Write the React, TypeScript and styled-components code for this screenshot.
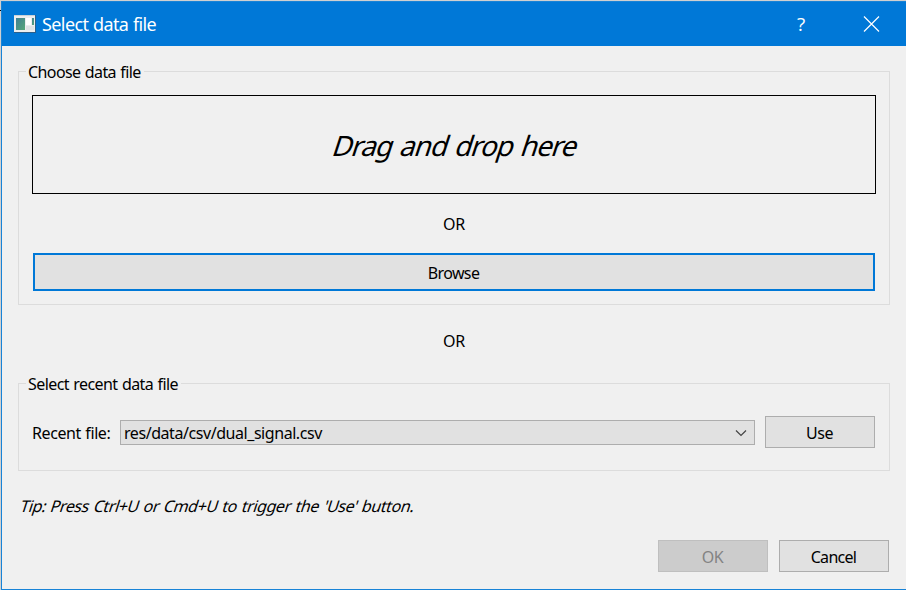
import React from "react";
import styled, { createGlobalStyle } from "styled-components";

const Global = createGlobalStyle`
  * { box-sizing: border-box; }
  body { margin: 0; overflow: hidden; background: #f0f0f0; }
`;

const Frame = styled.div`
  width: 906px;
  height: 590px;
  padding: 1px 0 0 1px;
  background: linear-gradient(#000, #000) 0 10px / 1px 1px no-repeat #d0d0d0;
`;

const Dialog = styled.div`
  height: 589px;
  display: flex;
  flex-direction: column;
  background: #f0f0f0;
  border: solid #1883d7;
  border-width: 1px 0 1px 1px;
  font: 16px/20px "Noto Sans", sans-serif;
  font-variant-ligatures: none;
  color: #000;
`;

const TitleBar = styled.header`
  height: 44px;
  flex: none;
  display: flex;
  align-items: center;
  padding: 0 26px 0 12px;
  background: #0078d7;
  color: #fff;
`;

const Title = styled.h1`
  flex: 1;
  margin: 0 0 0 6px;
  font-size: 18px;
  line-height: 24px;
  font-weight: 400;
`;

const TitleButton = styled.button`
  width: 18px;
  height: 18px;
  padding: 0;
  margin-left: 52px;
  border: 0;
  background: none;
  color: #fff;
  font: 400 19px/18px "Open Sans", "Noto Sans", sans-serif;
`;

const Label = styled.span<{ $spacing?: number; $words?: number }>`
  display: inline-block;
  white-space: pre;
  letter-spacing: ${(p) => p.$spacing ?? 0}px;
  word-spacing: ${(p) => p.$words ?? 0}px;
`;

const Slanted = styled(Label)`
  transform: skewX(-18deg);
`;

const Content = styled.main`
  flex: 1;
  display: flex;
  flex-direction: column;
  padding: 15px 16px 17px;
`;

const Group = styled.fieldset<{ $height: number }>`
  height: ${(p) => p.$height}px;
  flex: none;
  min-width: 0;
  margin: 0;
  padding: 0 13px;
  border: 1px solid #dcdcdc;
  display: flex;
  flex-direction: column;
`;

const Legend = styled.legend`
  height: 20px;
  line-height: 22px;
  margin-left: -6px;
  padding: 0 3px 0 2px;
`;

const DropZone = styled.div`
  height: 99px;
  margin-top: 14px;
  padding-left: 4px;
  flex: none;
  display: flex;
  align-items: center;
  justify-content: center;
  border: 1px solid #000;
  font-size: 28px;
  line-height: 36px;
`;

const Divider = styled.div<{ $height: number; $offset?: number }>`
  height: ${(p) => p.$height}px;
  padding-top: ${(p) => p.$offset ?? 0}px;
  flex: none;
  display: flex;
  align-items: center;
  justify-content: center;
`;

const PushButton = styled.button<{ $primary?: boolean }>`
  width: ${(p) => (p.$primary ? "auto" : "110px")};
  height: ${(p) => (p.$primary ? 38 : 32)}px;
  margin: ${(p) => (p.$primary ? "0 1px" : "0")};
  flex: none;
  padding: 2px 1px 0 0;
  border: ${(p) => (p.$primary ? "2px solid #0078d7" : "1px solid #adadad")};
  background: #e1e1e1;
  color: #000;
  font: inherit;
  &:disabled {
    border-color: #bfbfbf;
    background: #ccc;
    color: #838383;
  }
`;

const RecentRow = styled.div`
  display: flex;
  align-items: center;
  height: 32px;
  margin-top: 23px;
  padding-right: 1px;
`;

const RecentLabel = styled.label`
  width: 88px;
  padding-top: 2px;
`;

const ComboBox = styled.div`
  flex: 1;
  height: 25px;
  margin: 1px 10px 0 0;
  display: flex;
  align-items: center;
  justify-content: space-between;
  padding: 1px 7px 0 3px;
  border: 1px solid #adadad;
  background: #e1e1e1;
`;

const Tip = styled.p`
  margin: 25px 0 0 3px;
`;

const Actions = styled.footer`
  display: flex;
  justify-content: flex-end;
  gap: 11px;
  margin-top: auto;
  padding-right: 1px;
`;

const WindowIcon = () => (
  <svg width="22" height="19" viewBox="0 0 22 19" shapeRendering="crispEdges">
    <defs>
      <linearGradient id="pane" x1="0" y1="0" x2="1" y2="1">
        <stop offset="0" stopColor="#3f7f94" />
        <stop offset="1" stopColor="#58a878" />
      </linearGradient>
    </defs>
    <rect width="22" height="18" fill="#2c5f8a" />
    <rect y="0" width="21" height="17" fill="#eceeef" />
    <rect y="0" width="21" height="1" fill="#c9d2d8" />
    <rect x="2" y="3" width="9" height="12" fill="url(#pane)" />
    <rect x="12" y="3" width="5" height="7" fill="#fff" />
    <rect x="12" y="11" width="8" height="4" fill="#e0e3e5" />
    <rect x="18" y="3" width="2" height="7" fill="url(#pane)" />
  </svg>
);

export default function App() {
  return (
    <>
      <Global />
      <Frame>
        <Dialog>
          <TitleBar>
            <WindowIcon />
            <Title><Label $spacing={-0.6} $words={0.5}>Select data file</Label></Title>
            <TitleButton aria-label="Help">?</TitleButton>
            <TitleButton aria-label="Close">
              <svg width="18" height="18" viewBox="0 0 18 18">
                <path d="M2 1.5l15 15m0-15l-15 15" stroke="#fff" strokeWidth="1.2" />
              </svg>
            </TitleButton>
          </TitleBar>
          <Content>
            <Group $height={244}>
              <Legend><Label $spacing={-0.6} $words={0.8}>Choose data file</Label></Legend>
              <DropZone><Slanted $spacing={-1.2} $words={2.2}>Drag and drop here</Slanted></DropZone>
              <Divider $height={59}><Label $spacing={-0.3}>OR</Label></Divider>
              <PushButton $primary><Label $spacing={-0.6}>Browse</Label></PushButton>
            </Group>
            <Divider $height={68} $offset={3}><Label $spacing={-0.3}>OR</Label></Divider>
            <Group $height={98}>
              <Legend><Label $spacing={-0.58} $words={0.8}>Select recent data file</Label></Legend>
              <RecentRow>
                <RecentLabel><Label $spacing={-0.42} $words={0.8}>Recent file:</Label></RecentLabel>
                <ComboBox>
                  <Label $spacing={-0.44}>res/data/csv/dual_signal.csv</Label>
                  <svg width="12" height="8" viewBox="0 0 12 8">
                    <path d="M1 1.5l5 5 5-5" fill="none" stroke="#444" strokeWidth="1.2" />
                  </svg>
                </ComboBox>
                <PushButton><Label $spacing={-0.5}>Use</Label></PushButton>
              </RecentRow>
            </Group>
            <Tip><Slanted $spacing={-0.42} $words={1.1}>Tip: Press Ctrl+U or Cmd+U to trigger the 'Use' button.</Slanted></Tip>
            <Actions>
              <PushButton disabled><Label $spacing={-0.5}>OK</Label></PushButton>
              <PushButton><Label $spacing={-0.7}>Cancel</Label></PushButton>
            </Actions>
          </Content>
        </Dialog>
      </Frame>
    </>
  );
}
